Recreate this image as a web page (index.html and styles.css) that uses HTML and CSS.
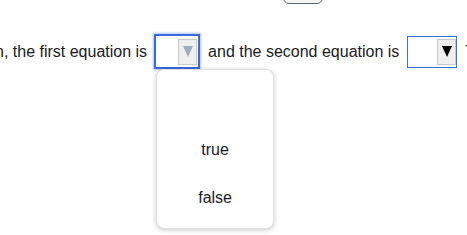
FILE: index.html
```html
<!DOCTYPE html>
<html>
<head>
<meta charset="utf-8">
<link rel="stylesheet" href="styles.css">
</head>
<body>
<div class="top-btn"></div>
<div class="line">
  <span class="txt">n, the first equation is</span>
  <div class="sel sel-focus">
    <div class="arrow-btn">
      <svg width="10" height="11" viewBox="0 0 10 11"><polygon points="0,0 10,0 5,11" fill="#a3abbd"/></svg>
    </div>
    <div class="menu">
      <div class="opt"></div>
      <div class="opt">true</div>
      <div class="opt">false</div>
    </div>
  </div>
  <span class="txt">and the second equation is</span>
  <div class="sel sel-plain">
    <div class="arrow-btn">
      <svg width="10" height="11" viewBox="0 0 10 11"><polygon points="0,0 10,0 5,11" fill="#000"/></svg>
    </div>
  </div>
  <span class="txt">T</span>
</div>
</body>
</html>
```

FILE: styles.css
```css
html, body {
  margin: 0;
  padding: 0;
  background: #fff;
  overflow: hidden;
}
body {
  font-family: "Liberation Sans", Arial, sans-serif;
  font-size: 16px;
  color: #1a1a1a;
  width: 467px;
  height: 235px;
}
.top-btn {
  box-sizing: border-box;
  width: 40px;
  height: 20px;
  margin-top: -16px;
  margin-left: 283px;
  border: 1px solid #5d6676;
  border-radius: 6px;
  background: #f5f6f8;
}
.line {
  display: flex;
  align-items: center;
  margin-top: 30px;
  margin-left: -5px;
  white-space: nowrap;
  gap: 8px;
}
.txt {
  line-height: 18px;
}
.txt:first-child {
  margin-right: -1px;
}
.sel {
  position: relative;
  box-sizing: border-box;
  display: flex;
  justify-content: flex-end;
  align-items: center;
  background: #fff;
  flex: none;
}
.sel-focus {
  width: 46px;
  height: 35px;
  border: 2px solid #3a6ad8;
  box-shadow: 0 0 2px 1px rgba(70, 120, 230, 0.45);
  padding-right: 1px;
}
.sel-plain {
  width: 50px;
  height: 32px;
  border: 1px solid #3b6fd6;
  padding-right: 0;
}
.arrow-btn {
  box-sizing: border-box;
  width: 19px;
  height: 26px;
  background: #efefef;
  border: 1px solid #c9c9c9;
  display: flex;
  align-items: center;
  justify-content: center;
}
.arrow-btn svg {
  display: block;
}
.menu {
  position: absolute;
  left: 0px;
  top: 33px;
  box-sizing: border-box;
  width: 118px;
  height: 160px;
  padding: 8px 0;
  background: #fff;
  border: 1px solid #e2e2e2;
  border-radius: 8px;
  box-shadow: 0 1px 5px rgba(0, 0, 0, 0.22);
  z-index: 2;
}
.opt {
  height: 48px;
  line-height: 48px;
  text-align: center;
  color: #1a1a1a;
}
```
